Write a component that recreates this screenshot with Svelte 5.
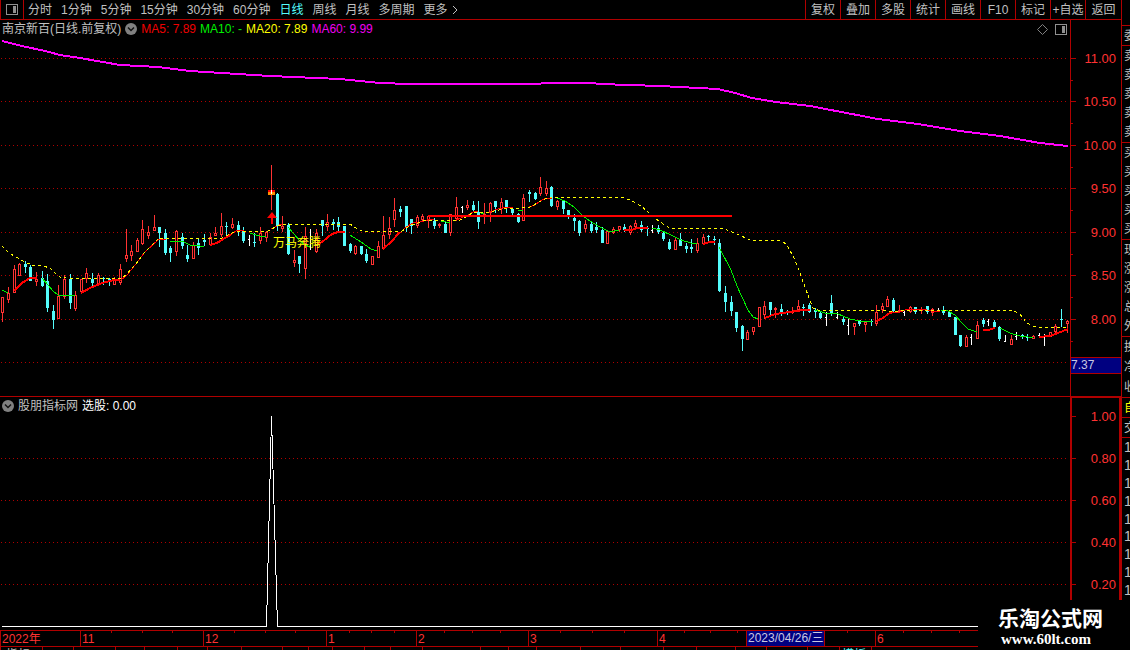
<script lang="ts">
	type Kind = 'r' | 'c' | 'w';
	// x, high, body top, body bottom, low, kind (r = up, c = down, w = flat)
	type Candle = [number, number, number, number, number, Kind];

	const periods = ['分时', '1分钟', '5分钟', '15分钟', '30分钟', '60分钟', '日线', '周线', '月线', '多周期', '更多'];
	const tools = ['复权', '叠加', '多股', '统计', '画线', 'F10', '标记', '+自选', '返回'];
	let active = $state('日线');

	const averages = [
		{ text: 'MA5: 7.89', cls: 'red' },
		{ text: 'MA10: -', cls: 'green' },
		{ text: 'MA20: 7.89', cls: 'yellow' },
		{ text: 'MA60: 9.99', cls: 'magenta' }
	];

	const prices = [
		{ y: 58, label: '11.00' },
		{ y: 101, label: '10.50' },
		{ y: 145, label: '10.00' },
		{ y: 188, label: '9.50' },
		{ y: 232, label: '9.00' },
		{ y: 275, label: '8.50' },
		{ y: 319, label: '8.00' },
		{ y: 362, label: '' }
	];
	const minorTicks = [80, 123, 167, 210, 254, 297, 341];

	const signals = [
		{ y: 416, label: '1.00' },
		{ y: 458, label: '0.80' },
		{ y: 500, label: '0.60' },
		{ y: 542, label: '0.40' },
		{ y: 584, label: '0.20' }
	];

	const months = [
		{ x: 0, label: '2022年' },
		{ x: 80, label: '11' },
		{ x: 203, label: '12' },
		{ x: 326, label: '1' },
		{ x: 416, label: '2' },
		{ x: 528, label: '3' },
		{ x: 657, label: '4' },
		{ x: 875, label: '6' }
	];
	const weekTicks = [111, 142, 172, 234, 265, 295, 349, 371, 394, 444, 472, 500, 560, 592, 624, 684, 710, 737, 847, 903, 931, 959];
	const tabTicks = [0, 42, 73, 115, 144, 177, 207, 241, 282, 308, 332, 364, 390, 422, 480, 508, 536, 580, 620, 663, 696, 735, 766, 807, 839, 871];

	const quoteGroups = [
		{ cls: 'head', rows: ['委'] },
		{ cls: 'five', rows: ['卖', '卖', '卖', '卖', '卖'] },
		{ cls: 'five', rows: ['买', '买', '买', '买', '买'] },
		{ cls: 'five', rows: ['现', '涨', '涨', '总', '外'] },
		{ cls: 'three', rows: ['换', '净', '收'] },
		{ cls: 'head own', rows: ['自'] },
		{ cls: 'head', rows: ['交'] },
		{ cls: 'trades', rows: ['1', '1', '1', '1', '1', '1', '1', '1', '1'] }
	];

	const candles: Candle[] = [
		[2, 297, 297, 313, 322, 'r'], [8, 287, 293, 300, 303, 'r'], [14, 265, 269, 293, 293, 'r'],
		[19, 263, 264, 276, 276, 'r'], [25, 261, 264, 267, 273, 'c'], [30, 265, 267, 281, 281, 'c'],
		[36, 272, 279, 282, 286, 'r'], [42, 271, 278, 286, 287, 'c'], [47, 274, 281, 308, 312, 'c'],
		[53, 305, 311, 320, 329, 'c'], [58, 285, 296, 319, 319, 'r'], [64, 275, 279, 297, 299, 'r'],
		[70, 274, 279, 303, 309, 'c'], [75, 291, 295, 309, 311, 'r'], [81, 279, 279, 292, 292, 'r'],
		[86, 268, 273, 279, 283, 'r'], [92, 273, 279, 283, 286, 'c'], [98, 273, 275, 285, 285, 'r'],
		[103, 277, 278, 279, 285, 'c'], [109, 278, 279, 280, 286, 'c'], [114, 277, 280, 285, 285, 'r'],
		[120, 264, 269, 283, 285, 'r'], [126, 229, 255, 259, 262, 'r'], [131, 245, 251, 256, 261, 'r'],
		[137, 238, 240, 252, 252, 'r'], [142, 220, 229, 244, 245, 'r'], [148, 226, 232, 236, 239, 'r'],
		[154, 215, 227, 231, 231, 'r'], [159, 227, 227, 233, 247, 'c'], [165, 229, 233, 253, 255, 'c'],
		[170, 246, 248, 253, 262, 'c'], [176, 230, 231, 252, 256, 'r'], [182, 233, 237, 246, 249, 'c'],
		[187, 245, 255, 259, 262, 'c'], [193, 242, 245, 259, 259, 'r'], [198, 239, 243, 248, 255, 'c'],
		[204, 234, 240, 242, 246, 'c'], [210, 233, 237, 245, 245, 'r'], [215, 227, 233, 236, 236, 'r'],
		[221, 213, 226, 235, 237, 'r'], [226, 222, 226, 227, 235, 'c'], [232, 218, 224, 228, 229, 'r'],
		[238, 221, 225, 230, 236, 'c'], [243, 227, 231, 241, 243, 'c'], [249, 235, 239, 239, 246, 'w'],
		[254, 233, 242, 243, 247, 'c'], [260, 227, 233, 241, 244, 'r'], [266, 231, 232, 238, 242, 'r'],
		[277, 193, 194, 226, 231, 'c'], [282, 216, 226, 229, 232, 'r'], [288, 223, 225, 254, 255, 'c'],
		[294, 250, 260, 263, 267, 'r'], [299, 256, 256, 264, 273, 'c'], [305, 227, 236, 269, 279, 'r'],
		[310, 229, 246, 246, 250, 'w'], [316, 229, 233, 252, 253, 'r'], [322, 220, 220, 226, 236, 'c'],
		[327, 214, 222, 227, 231, 'r'], [333, 219, 222, 224, 230, 'c'], [338, 217, 222, 227, 231, 'c'],
		[344, 226, 226, 246, 246, 'c'], [350, 243, 244, 251, 253, 'c'], [355, 245, 246, 254, 255, 'r'],
		[361, 246, 246, 254, 255, 'c'], [366, 249, 254, 261, 263, 'c'], [372, 256, 256, 265, 265, 'r'],
		[378, 241, 246, 258, 258, 'r'], [383, 216, 235, 249, 250, 'r'], [389, 217, 228, 235, 239, 'r'],
		[394, 198, 210, 220, 227, 'r'], [400, 206, 209, 212, 217, 'c'], [406, 206, 206, 227, 232, 'c'],
		[411, 219, 219, 226, 234, 'c'], [417, 215, 217, 226, 228, 'r'], [422, 214, 216, 220, 222, 'r'],
		[428, 215, 216, 221, 228, 'r'], [434, 218, 221, 226, 229, 'c'], [439, 223, 224, 226, 228, 'r'],
		[445, 222, 224, 233, 233, 'c'], [450, 214, 214, 233, 236, 'r'], [456, 197, 207, 219, 221, 'r'],
		[462, 206, 207, 207, 213, 'w'], [467, 200, 205, 208, 210, 'r'], [473, 201, 205, 210, 212, 'c'],
		[478, 201, 212, 222, 229, 'c'], [484, 203, 214, 217, 224, 'r'], [490, 202, 203, 213, 222, 'r'],
		[495, 201, 201, 207, 213, 'c'], [501, 198, 202, 209, 214, 'r'], [506, 200, 200, 208, 213, 'c'],
		[512, 208, 209, 213, 215, 'c'], [518, 213, 214, 222, 223, 'c'], [523, 194, 198, 221, 221, 'r'],
		[529, 190, 192, 194, 202, 'c'], [535, 192, 193, 199, 200, 'c'], [540, 177, 187, 194, 196, 'r'],
		[546, 181, 188, 194, 196, 'r'], [551, 186, 187, 206, 207, 'c'], [557, 200, 201, 207, 210, 'r'],
		[563, 200, 201, 209, 214, 'c'], [568, 210, 210, 216, 219, 'c'], [574, 214, 218, 221, 231, 'c'],
		[579, 220, 221, 233, 236, 'c'], [585, 220, 224, 229, 232, 'r'], [591, 222, 224, 231, 233, 'c'],
		[596, 222, 227, 230, 233, 'c'], [602, 227, 230, 243, 243, 'c'], [607, 231, 231, 244, 244, 'r'],
		[613, 227, 229, 233, 234, 'r'], [619, 226, 226, 230, 232, 'r'], [624, 224, 227, 230, 232, 'c'],
		[630, 225, 226, 233, 235, 'r'], [635, 220, 223, 227, 229, 'r'], [641, 221, 225, 230, 232, 'c'],
		[647, 226, 228, 229, 236, 'c'], [652, 225, 230, 230, 233, 'w'], [658, 225, 228, 232, 234, 'c'],
		[663, 231, 233, 239, 241, 'c'], [669, 239, 242, 249, 250, 'c'], [675, 237, 240, 250, 250, 'r'],
		[680, 233, 239, 246, 246, 'c'], [686, 243, 246, 249, 253, 'c'], [691, 239, 247, 249, 253, 'c'],
		[697, 238, 243, 251, 253, 'r'], [703, 234, 237, 244, 244, 'r'], [708, 235, 236, 237, 241, 'c'],
		[714, 236, 239, 240, 245, 'c'], [719, 239, 243, 291, 292, 'c'], [725, 286, 293, 302, 312, 'c'],
		[731, 296, 302, 311, 316, 'c'], [736, 312, 312, 328, 332, 'c'], [742, 325, 326, 339, 351, 'c'],
		[747, 330, 332, 340, 340, 'r'], [753, 327, 327, 332, 335, 'r'], [759, 307, 307, 327, 327, 'r'],
		[764, 301, 306, 315, 319, 'r'], [770, 302, 302, 310, 315, 'c'], [775, 307, 308, 310, 318, 'r'],
		[781, 304, 309, 314, 316, 'c'], [787, 310, 312, 313, 315, 'c'], [792, 307, 311, 313, 314, 'r'],
		[798, 300, 306, 310, 312, 'r'], [803, 304, 307, 308, 316, 'c'], [809, 303, 305, 312, 313, 'c'],
		[815, 308, 310, 312, 318, 'c'], [820, 311, 313, 318, 319, 'c'], [826, 312, 317, 317, 326, 'w'],
		[831, 295, 303, 314, 316, 'c'], [837, 312, 317, 317, 319, 'w'], [843, 317, 319, 322, 325, 'c'],
		[848, 319, 325, 325, 335, 'w'], [854, 323, 323, 327, 335, 'r'], [859, 320, 320, 324, 326, 'c'],
		[865, 321, 322, 325, 332, 'r'], [871, 319, 321, 322, 326, 'c'], [876, 305, 312, 324, 326, 'r'],
		[882, 303, 306, 310, 313, 'r'], [887, 296, 299, 307, 307, 'r'], [893, 298, 300, 311, 313, 'c'],
		[899, 305, 310, 312, 313, 'r'], [904, 311, 312, 312, 316, 'w'], [910, 306, 307, 312, 313, 'r'],
		[915, 307, 307, 312, 314, 'c'], [921, 307, 309, 311, 314, 'r'], [927, 306, 306, 312, 314, 'c'],
		[932, 308, 309, 313, 316, 'r'], [938, 308, 311, 311, 312, 'w'], [943, 306, 310, 313, 315, 'c'],
		[949, 312, 312, 317, 317, 'c'], [955, 317, 317, 335, 335, 'c'], [960, 335, 335, 346, 347, 'c'],
		[966, 335, 337, 347, 347, 'r'], [971, 334, 337, 337, 345, 'w'], [977, 321, 325, 339, 339, 'r'],
		[983, 318, 320, 324, 327, 'c'], [988, 319, 321, 321, 326, 'w'], [994, 320, 322, 327, 327, 'c'],
		[999, 326, 327, 339, 341, 'c'], [1005, 335, 341, 341, 342, 'w'], [1011, 335, 339, 345, 345, 'r'],
		[1016, 332, 336, 336, 340, 'w'], [1022, 334, 335, 336, 339, 'c'], [1027, 334, 337, 338, 341, 'c'],
		[1033, 335, 336, 339, 339, 'r'], [1039, 333, 335, 335, 337, 'w'], [1044, 334, 336, 336, 346, 'w'],
		[1050, 332, 332, 337, 337, 'r'], [1055, 324, 326, 332, 334, 'r'], [1061, 309, 319, 320, 327, 'c'],
		[1067, 320, 321, 324, 333, 'r']
	];

	const falling = [
		'2,290 8,293',
		'42,278 48,285 53,291 58,295 70,295 75,296',
		'170,241 182,241 190,245 200,246 204,246',
		'250,233 256,235 260,236 266,236',
		'288,227 299,240 305,245 310,247',
		'350,235 361,242 371,249 377,251',
		'441,221 446,222 450,222',
		'481,213 484,214',
		'518,210 523,210',
		'557,198 565,201 574,207 582,215 590,221 600,227 608,231 614,231 619,230',
		'652,228 660,230 671,235 681,240 691,243 697,244',
		'719,247 731,270 737,286 742,297 748,310 753,317 758,319',
		'815,310 825,313 838,314 850,319 860,321 872,322',
		'941,310 948,311 955,315 961,322 968,329 977,332',
		'1000,328 1010,333 1020,336 1028,337 1033,337'
	];
	const risingBold = [
		'14,291 22,283 30,278 37,278',
		'81,293 90,288 102,283 114,280 120,280',
		'210,245 217,243 225,238 232,234',
		'318,244 322,242 332,234 338,232 345,232',
		'383,249 391,242 400,232',
		'624,230 632,230 637,228 648,228',
		'703,244 710,242 715,242',
		'765,318 775,314 790,312 803,310 810,310',
		'876,321 883,318 888,314 893,312',
		'983,330 988,330 995,328',
		'1039,337 1050,336 1058,333 1068,329'
	];
	const rising = [
		'120,281 127,275 135,265 145,252 159,239 166,239',
		'231,234 238,230 244,230',
		'271,229 277,226 282,224',
		'400,233 406,227 413,223 420,222 427,220 434,219',
		'456,220 461,218 468,215 473,212 478,211',
		'488,213 495,210 505,207 513,207',
		'529,207 535,205 540,201 546,198 552,198',
		'893,313 900,312 905,310 910,309 921,309 932,311 940,311'
	];
	const ma20 =
		'2,246 8,252 14,256 25,262 32,265 43,266 50,268 56,274 60,277 66,278 120,279 126,275 135,265 145,252 159,238 222,238 232,233 238,231 268,231 277,226 284,224 350,224 356,228 362,231 402,231 411,225 418,223 424,220 460,220 468,216 473,212 490,212 503,209 512,208 520,208 530,207 543,200 550,197 622,197 630,200 641,206 648,212 660,222 670,228 722,228 735,233 750,240 782,241 787,245 794,258 800,273 806,290 813,308 818,310 884,310 893,312 905,310 1012,310 1020,314 1026,322 1032,326 1038,327 1062,327 1068,328';
	const ma60 =
		'2,41 10,43 22,46 45,51 60,55 80,58 120,65 158,67 190,71 270,76 340,79 380,83 410,84 540,84 542,83 592,83 600,84 660,86 718,89 735,93 752,98 776,102 810,106 878,119 918,124 960,131 1000,136 1040,143 1068,146';
</script>

{#snippet chevron()}
	<svg class="chevron" viewBox="0 0 12 12" aria-hidden="true">
		<circle cx="6" cy="6" r="6" fill="#808080" />
		<path d="M3 4.5 6 7.5 9 4.5" fill="none" stroke="#111" stroke-width="1.5" />
	</svg>
{/snippet}

{#snippet panelIcon()}
	<svg class="panel-icon" viewBox="0 0 12 11" aria-hidden="true">
		<rect x="0.5" y="0.5" width="11" height="10" rx="1" fill="none" stroke="#909090" />
		<rect x="7" y="2" width="3" height="7" fill="#909090" />
	</svg>
{/snippet}

<div class="page">
	<div class="main">
		<header class="toolbar">
			<button class="layout" aria-label="布局">{@render panelIcon()}</button>
			<nav class="periods">
				{#each periods as p (p)}
					<button class:active={active === p} onclick={() => (active = p)}>
						{p}{#if p === '更多'}<svg class="more" viewBox="0 0 6 10" aria-hidden="true"><path d="M1 1 5 5 1 9" fill="none" stroke="#c0c0c0" /></svg>{/if}
					</button>
				{/each}
			</nav>
			<div class="tools">
				{#each tools as t (t)}
					<button>{t}</button>
				{/each}
			</div>
		</header>

		<!-- Price chart -->
		<section class="panel">
			<div class="plot">
				<div class="caption">
					<span>南京新百(日线.前复权)</span>
					{@render chevron()}
					{#each averages as a (a.text)}
						<span class={a.cls}>{a.text}</span>
					{/each}
					<span class="corner">
						<svg class="diamond" viewBox="0 0 11 11" aria-hidden="true">
							<path d="M5.5 0.5 10.5 5.5 5.5 10.5 0.5 5.5Z" fill="none" stroke="#808080" />
						</svg>
						{@render panelIcon()}
					</span>
				</div>
				<svg class="chart" viewBox="0 38 1070 358">
					{#each prices as p (p.y)}
						<line class="grid" x1="1" x2="1068" y1={p.y + 0.5} y2={p.y + 0.5} />
					{/each}

					{#each candles as [x, high, top, bottom, low, kind] (x)}
						{#if kind === 'r'}
							<rect class="up" {x} y={high} width="1" height={low - high} />
							<rect class="up" x={x - 1} y={top} width="3" height={bottom - top} />
							<rect class="hollow" {x} y={top + 1} width="1" height={Math.max(bottom - top - 2, 0)} />
						{:else if kind === 'c'}
							<rect class="down" {x} y={high} width="1" height={low - high} />
							<rect class="down" x={x - 1} y={top} width="3" height={Math.max(bottom - top, 1)} />
						{:else}
							<rect class="flat" {x} y={high} width="1" height={low - high} />
							<rect class="flat" x={x - 1} y={top} width="2" height="1" />
						{/if}
					{/each}

					{#each falling as points (points)}
						<polyline class="line falling" {points} />
					{/each}
					{#each risingBold as points (points)}
						<polyline class="line rising bold" {points} />
					{/each}
					{#each rising as points (points)}
						<polyline class="line rising" {points} />
					{/each}
					<polyline class="line ma20" points={ma20} />
					<polyline class="line ma60" points={ma60} />
					<rect x="428" y="215" width="304" height="2" fill="#f00" />

					<!-- Buy signal on the spike day -->
					<rect class="up" x="271" y="165" width="1" height="45" />
					<rect x="268" y="190" width="7" height="2" fill="#f00" />
					<rect x="268" y="192" width="7" height="3" fill="#ff9000" />
					<rect x="271" y="190" width="1" height="4" fill="#fff" />
					<path d="M272 212 277 218H273V224H271V218H267Z" fill="#f00" />
					<text class="signal" x="273" y="247">万马奔腾</text>
				</svg>
			</div>
			<svg class="axis" viewBox="0 20 51 376">
				<rect x="0" y="20" width="1" height="376" />
				{#each prices as p (p.y)}
					<rect x="1" y={p.y} width="5" height="1" />
					<text x="46" y={p.y + 5} text-anchor="end">{p.label}</text>
				{/each}
				{#each minorTicks as y (y)}
					<rect x="1" {y} width="2" height="1" />
				{/each}
				<rect x="0" y="357" width="51" height="17" />
				<rect class="cursor" x="1" y="358" width="50" height="15" />
				<text class="cursor-value" x="1" y="369">7.37</text>
			</svg>
		</section>

		<!-- Indicator chart -->
		<section class="panel indicator">
			<div class="plot">
				<div class="caption">
					{@render chevron()}
					<span>股朋指标网</span>
					<span class="white">选股: 0.00</span>
				</div>
				<svg class="chart" viewBox="0 414 1070 216">
					{#each signals.slice(1) as s (s.y)}
						<line class="grid" x1="1" x2="1068" y1={s.y + 0.5} y2={s.y + 0.5} />
					{/each}
					<polyline class="line spike" points="2,626.5 266.5,626.5 271.5,416 277.5,626.5 1068,626.5" />
				</svg>
			</div>
			<svg class="axis" viewBox="0 397 51 233">
				<rect x="0" y="397" width="51" height="1" />
				<rect x="0" y="397" width="2" height="233" />
				<rect x="49" y="397" width="2" height="233" />
				{#each signals as s (s.y)}
					<rect x="2" y={s.y} width="4" height="1" />
					<text x="46" y={s.y + 5} text-anchor="end">{s.label}</text>
				{/each}
			</svg>
		</section>

		<svg class="dates" viewBox="0 630 1121 17">
			<rect x="0" y="630" width="1121" height="1" />
			<rect x="0" y="646" width="1121" height="1" />
			{#each months as m (m.x)}
				<rect x={m.x} y="630" width="1" height="16" />
				<text x={m.x + 2} y="643">{m.label}</text>
			{/each}
			{#each weekTicks as x (x)}
				<rect {x} y="631" width="1" height="2" />
			{/each}
			<rect x="746" y="630" width="79" height="17" />
			<rect class="cursor" x="747" y="631" width="77" height="15" />
			<text class="cursor-value" x="748" y="642">2023/04/26/三</text>
		</svg>

		<svg class="tabs" viewBox="0 647 1121 3">
			{#each tabTicks as x (x)}
				<rect {x} y="647" width="1" height="3" />
			{/each}
			<text x="6" y="659">指标</text>
			<text class="current" x="842" y="659">模板</text>
		</svg>
	</div>

	<aside class="quotes">
		{#each quoteGroups as g, i (i)}
			<div class="group {g.cls}">
				{#each g.rows as row}
					<span>{row}</span>
				{/each}
			</div>
		{/each}
	</aside>

	<div class="watermark">
		<strong>乐淘公式网</strong>
		<a href="http://www.60lt.com">www.60lt.com</a>
	</div>
</div>

<style>
	:global(body) {
		background: #000;
	}

	.page {
		position: relative;
		display: grid;
		grid-template-columns: minmax(0, 1fr) 9px;
		overflow: hidden;
		background: #000;
		color: #c0c0c0;
		font-family: 'Liberation Sans', 'Noto Sans CJK SC', sans-serif;
		font-size: 12px;
		line-height: 16px;
	}

	button {
		padding: 0;
		border: 0;
		background: none;
		color: inherit;
		font: inherit;
		white-space: nowrap;
		cursor: pointer;
	}

	svg {
		display: block;
	}

	rect,
	line,
	polyline {
		shape-rendering: crispEdges;
	}

	/* Toolbar */
	.toolbar {
		display: flex;
		height: 19px;
		border-bottom: 1px solid #b00000;
		border-left: 1px solid #b00000;
	}

	.layout {
		display: grid;
		place-items: center;
		width: 23px;
		border-right: 1px solid #b00000;
	}

	.panel-icon {
		width: 12px;
		height: 11px;
	}

	.periods {
		display: flex;
		flex: 1;
		gap: 9px;
		padding-left: 4px;
	}

	.periods button {
		display: flex;
		align-items: center;
		gap: 4px;
	}

	.periods .active {
		color: #54fcfc;
	}

	.more {
		width: 6px;
		height: 10px;
	}

	.tools {
		display: flex;
	}

	.tools button {
		width: 35px;
		border-left: 1px solid #b00000;
	}

	.tools button:last-child {
		width: 36px;
	}

	/* Chart panels */
	.panel {
		display: grid;
		grid-template-columns: minmax(0, 1fr) 51px;
		border-bottom: 1px solid #b00000;
	}

	.indicator {
		border-bottom: 0;
	}

	.caption {
		display: flex;
		align-items: center;
		gap: 4px;
		height: 18px;
		padding: 0 3px 0 2px;
		white-space: nowrap;
	}

	.indicator .caption {
		height: 17px;
	}

	.chevron {
		width: 12px;
		height: 12px;
	}

	.corner {
		display: flex;
		align-items: center;
		gap: 7px;
		margin-left: auto;
	}

	.diamond {
		width: 11px;
		height: 11px;
	}

	.red {
		color: #f00000;
	}

	.green {
		color: #00f000;
	}

	.yellow {
		color: #ffff00;
	}

	.magenta {
		color: #f000f0;
	}

	.white {
		color: #fff;
	}

	.chart,
	.dates,
	.tabs {
		width: 100%;
		height: auto;
	}

	.grid {
		stroke: #b00000;
		stroke-dasharray: 1 3;
	}

	.up {
		fill: #ff3232;
	}

	.hollow {
		fill: #000;
	}

	.down {
		fill: #54fcfc;
	}

	.flat {
		fill: #fff;
	}

	.line {
		fill: none;
		stroke-width: 1;
	}

	.falling {
		stroke: #00f000;
	}

	.rising {
		stroke: #ff0000;
	}

	.ma60,
	.bold {
		stroke-width: 2;
	}

	.ma20 {
		stroke: #ffff00;
		stroke-dasharray: 3 3;
	}

	.ma60 {
		stroke: #ff00ff;
	}

	.spike {
		stroke: #fff;
	}

	.signal {
		fill: #ffff00;
	}

	/* Axes */
	.axis {
		width: 51px;
		height: 100%;
	}

	.axis rect,
	.dates rect,
	.tabs rect {
		fill: #b00000;
	}

	.axis text,
	.dates text {
		fill: #ff3232;
	}

	.axis text {
		font-size: 13px;
	}

	.axis .cursor,
	.dates .cursor {
		fill: #000080;
	}

	.axis .cursor-value,
	.dates .cursor-value {
		fill: #c8c8e0;
	}

	.axis .cursor-value {
		font-size: 12px;
	}

	.tabs text {
		fill: #c0c0c0;
	}

	.tabs .current {
		fill: #54fcfc;
	}

	/* Quote column, only its left edge is in view */
	.quotes {
		box-sizing: border-box;
		height: 0;
		min-height: 100%;
		padding-top: 25px;
		border-left: 1px solid #b00000;
		overflow: hidden;
	}

	.group {
		box-sizing: border-box;
		display: flex;
		flex-direction: column;
		padding-left: 2px;
		border-top: 1px solid #b00000;
	}

	.group span {
		display: flex;
		flex: 1;
		align-items: center;
	}

	.head {
		height: 20px;
	}

	.five {
		height: 97px;
	}

	.three {
		height: 61px;
	}

	.own {
		color: #ffff00;
	}

	.trades {
		height: 162px;
		font-size: 14px;
	}

	.watermark {
		position: absolute;
		right: 0;
		bottom: 0;
		box-sizing: border-box;
		display: flex;
		flex-direction: column;
		width: 152px;
		height: 50px;
		padding: 8px 0 0 20px;
		background: #000;
		color: #fff;
	}

	.watermark strong {
		font-size: 21px;
		line-height: 22px;
	}

	.watermark a {
		padding-left: 3px;
		color: #fff;
		font-family: 'Liberation Serif', serif;
		font-size: 15px;
		font-weight: 700;
		line-height: 18px;
		text-decoration: none;
	}
</style>
